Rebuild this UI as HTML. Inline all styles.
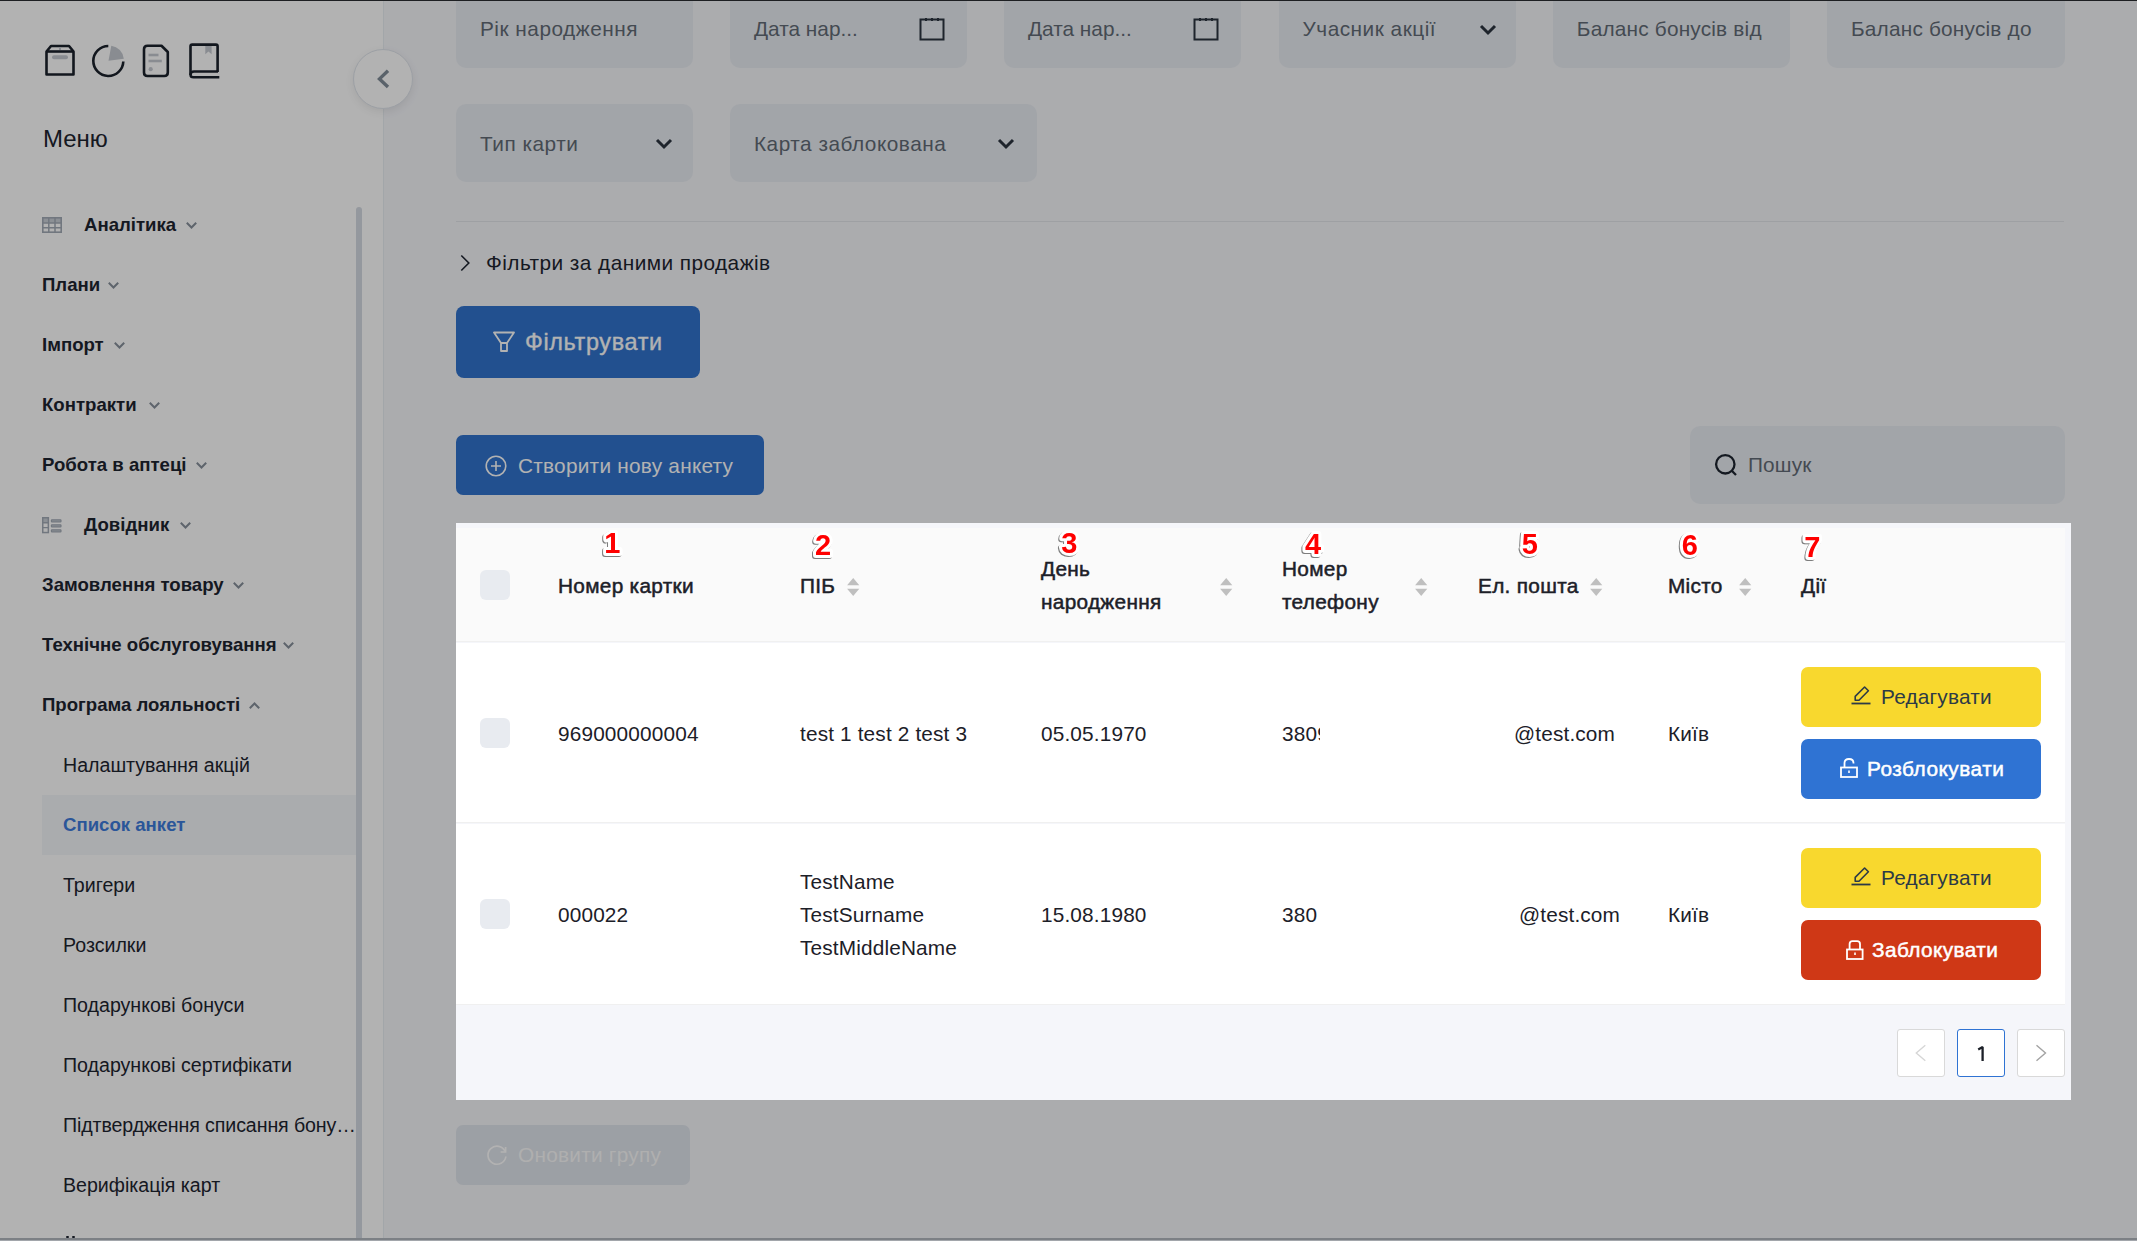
<!DOCTYPE html>
<html><head><meta charset="utf-8">
<style>
*{box-sizing:border-box;margin:0;padding:0}
html,body{width:2137px;height:1241px;overflow:hidden}
body{font-family:"Liberation Sans",sans-serif;background:#f5f6fa;position:relative;color:#1e2530}
.abs{position:absolute}
svg{position:absolute;overflow:visible}
#side{position:absolute;left:0;top:0;width:384px;height:1241px;background:#fff;border-right:1px solid #e9eef2}
.mi{position:absolute;left:42px;font-size:18.6px;font-weight:bold;color:#1e2530;white-space:nowrap;line-height:20px}
.si{position:absolute;left:63px;font-size:19.6px;color:#1e2530;white-space:nowrap;line-height:20px}
.inp{position:absolute;width:237px;height:78px;background:#e9edf2;border-radius:10px}
.inp .t{position:absolute;left:24px;font-size:20.8px;letter-spacing:.5px;line-height:20px;color:#626b76;white-space:nowrap}
.btn{position:absolute;background:#3173cd;border-radius:7px;color:#fff;white-space:nowrap}
#hl{position:absolute;left:456px;top:523px;width:1615px;height:577px;background:#f5f6fa;box-shadow:0 0 0 4000px rgba(0,0,0,.3);z-index:5}
#tbl{position:absolute;left:456px;top:523px;width:1615px;height:577px;z-index:6}
.th{position:absolute;font-size:20.8px;color:#1c2028;line-height:20px;white-space:nowrap;letter-spacing:.3px;-webkit-text-stroke:.5px #1c2028}
.td{position:absolute;font-size:20.8px;color:#1c2028;line-height:20px;white-space:nowrap;letter-spacing:.15px}
.cb{position:absolute;left:24px;width:30px;height:30px;border-radius:6px;background:#e8ebf0}
.abtn{position:absolute;left:1345px;width:240px;height:60px;border-radius:7px;white-space:nowrap}
.abtn span{position:absolute;line-height:20px;white-space:nowrap}
.pg{position:absolute;top:506px;width:48px;height:48px;border:1px solid #d9d9d9;border-radius:3px;background:#fff}
.num{position:absolute;font-size:29px;font-weight:bold;color:#f00;line-height:20px;
 text-shadow:0 0 1px #fff,1.5px 0 0 #fff,-1.5px 0 0 #fff,0 1.5px 0 #fff,0 -1.5px 0 #fff,1.5px 1.5px 0 #fff,-1.5px -1.5px 0 #fff,1.5px -1.5px 0 #fff,-1.5px 1.5px 0 #fff,0 3px 1px #999}
</style></head><body>
<div id="side">
  <!-- top icons -->
  <svg style="left:0;top:0" width="240" height="100" viewBox="0 0 240 100">
    <!-- box -->
    <path d="M46.5 51.5 L51 46 H69 L73.5 51.5 V74.5 H46.5 Z" fill="none" stroke="#1b212b" stroke-width="2.6" stroke-linejoin="round"/>
    <line x1="46.5" y1="51.5" x2="73.5" y2="51.5" stroke="#1b212b" stroke-width="2.6"/>
    <line x1="60" y1="47" x2="60" y2="50" stroke="#c5c9d0" stroke-width="2"/>
    <line x1="54" y1="57.3" x2="66" y2="57.3" stroke="#c5c9d0" stroke-width="4" stroke-linecap="round"/>
    <!-- pie -->
    <path d="M108.3 46 A15 15 0 1 0 123.3 61.5" fill="none" stroke="#1b212b" stroke-width="2.6"/>
    <path d="M108.5 60.8 L111.3 45.8 A14.5 14.5 0 0 1 123.8 58.8 Z" fill="#c5c9d0"/>
    <!-- doc -->
    <path d="M147.5 45.8 H161.5 L167.8 52 V72.5 Q167.8 76 164.3 76 H147.5 Q144 76 144 72.5 V49.3 Q144 45.8 147.5 45.8 Z" fill="none" stroke="#1b212b" stroke-width="2.6" stroke-linejoin="round"/>
    <line x1="148.5" y1="55" x2="158.5" y2="55" stroke="#c5c9d0" stroke-width="2.6"/>
    <line x1="148.5" y1="61" x2="161.8" y2="61" stroke="#c5c9d0" stroke-width="2.6"/>
    <circle cx="150.7" cy="69.2" r="2.1" fill="#c5c9d0"/>
    <!-- book -->
    <path d="M218 71.5 H194 Q190.5 71.5 190.5 75 Q190.5 77.3 193.5 77.3 H219.3" fill="none" stroke="#1b212b" stroke-width="2.4"/>
    <path d="M190.5 75 V46.3 Q190.5 44.6 192.2 44.6 H216 Q217.6 44.6 217.6 46.3 V72" fill="none" stroke="#1b212b" stroke-width="2.6"/>
    <path d="M205.3 46 H211.6 V54.2 L208.45 51.5 L205.3 54.2 Z" fill="#c5c9d0"/>
  </svg>
  <div class="abs" style="left:43px;top:129px;font-size:24px;line-height:20px;color:#1e2530">Меню</div>

  <!-- menu groups; baseline offset: line-height 20px, ascent -->
  <svg style="left:42px;top:217px" width="20" height="16" viewBox="0 0 20 16">
    <rect x="0.8" y="0.8" width="18.4" height="5.2" fill="#c9ced6"/>
    <rect x="0.8" y="0.8" width="18.4" height="14.4" fill="none" stroke="#a3abb6" stroke-width="1.6"/>
    <path d="M0.8 6H19.2M0.8 10.8H19.2M6.8 0.8V15.2M13 0.8V15.2" stroke="#a3abb6" stroke-width="1.5"/>
  </svg>
  <div class="mi" style="left:84px;top:215px">Аналітика</div>
  <div class="mi" style="top:275px">Плани</div>
  <div class="mi" style="top:335px">Імпорт</div>
  <div class="mi" style="top:395px">Контракти</div>
  <div class="mi" style="top:455px">Робота в аптеці</div>
  <svg style="left:42px;top:517px" width="20" height="17" viewBox="0 0 20 17">
    <rect x="0.75" y="0.75" width="5.6" height="5" fill="#c9ced6"/>
    <rect x="0.75" y="0.75" width="5.6" height="14.8" fill="none" stroke="#a3abb6" stroke-width="1.5"/>
    <path d="M0.75 5.8H6.4M0.75 10.6H6.4" stroke="#a3abb6" stroke-width="1.4"/>
    <rect x="9.4" y="2.8" width="9.6" height="2" rx="0.6" fill="#c9ced6" stroke="#a3abb6" stroke-width="1.2"/>
    <rect x="9.4" y="7.8" width="9.6" height="2" rx="0.6" fill="#c9ced6" stroke="#a3abb6" stroke-width="1.2"/>
    <rect x="9.4" y="12.8" width="9.6" height="2" rx="0.6" fill="#c9ced6" stroke="#a3abb6" stroke-width="1.2"/>
  </svg>
  <div class="mi" style="left:84px;top:515px">Довідник</div>
  <div class="mi" style="top:575px">Замовлення товару</div>
  <div class="mi" style="top:635px">Технічне обслуговування</div>
  <div class="mi" style="top:695px">Програма лояльності</div>
  <!-- chevrons -->
  <svg style="left:0;top:0" width="384" height="720" viewBox="0 0 384 720">
    <g fill="none" stroke="#87909b" stroke-width="2" stroke-linecap="square">
      <path d="M187.5 223.5 L191.5 227.5 L195.5 223.5"/>
      <path d="M109.5 283.5 L113.5 287.5 L117.5 283.5"/>
      <path d="M115.5 343.5 L119.5 347.5 L123.5 343.5"/>
      <path d="M150.5 403.5 L154.5 407.5 L158.5 403.5"/>
      <path d="M197.5 463.5 L201.5 467.5 L205.5 463.5"/>
      <path d="M181.5 523.5 L185.5 527.5 L189.5 523.5"/>
      <path d="M234.5 583.5 L238.5 587.5 L242.5 583.5"/>
      <path d="M284.5 643.5 L288.5 647.5 L292.5 643.5"/>
      <path d="M250.5 707.5 L254.5 703.5 L258.5 707.5"/>
    </g>
  </svg>
  <div class="si" style="top:755px">Налаштування акцій</div>
  <div class="abs" style="left:42px;top:795px;width:314px;height:60px;background:#f4f6f9"></div>
  <div class="mi" style="left:63px;top:815px;color:#3d7bdc">Список анкет</div>
  <div class="si" style="top:875px">Тригери</div>
  <div class="si" style="top:935px">Розсилки</div>
  <div class="si" style="top:995px">Подарункові бонуси</div>
  <div class="si" style="top:1055px">Подарункові сертифікати</div>
  <div class="si" style="top:1115px;letter-spacing:-.1px">Підтвердження списання бону…</div>
  <div class="si" style="top:1175px">Верифікація карт</div>
  <div class="abs" style="left:66px;top:1236px;width:3px;height:2px;border-radius:1px;background:#1e2530"></div><div class="abs" style="left:72px;top:1236px;width:3px;height:2px;border-radius:1px;background:#1e2530"></div>
  <div class="abs" style="left:356px;top:207px;width:6px;height:1040px;background:#d5dae2;border-radius:3px"></div>
</div>
<!-- collapse button -->
<div class="abs" style="left:353px;top:49px;width:60px;height:60px;border-radius:50%;background:#fff;border:1px solid #e0e5ec;box-shadow:0 3px 8px rgba(0,0,0,.08)"></div>
<svg style="left:354px;top:50px" width="58" height="58" viewBox="0 0 58 58">
  <path d="M34 20.7 L25.5 28.9 L34 37" fill="none" stroke="#818d99" stroke-width="3.4"/>
</svg>

<div id="main">
  <!-- row 1 inputs -->
  <div class="inp" style="left:456px;top:-10px"><div class="t" style="top:29px">Рік народження</div></div>
  <div class="inp" style="left:730px;top:-10px"><div class="t" style="top:29px;letter-spacing:0">Дата нар...</div>
    <svg style="left:189px;top:27px" width="26" height="24" viewBox="0 0 26 24"><rect x="1.5" y="2.5" width="23" height="20" fill="none" stroke="#2b3440" stroke-width="2"/><path d="M7 1V4M13 1V4M19 1V4" stroke="#2b3440" stroke-width="2"/></svg></div>
  <div class="inp" style="left:1004px;top:-10px"><div class="t" style="top:29px;letter-spacing:0">Дата нар...</div>
    <svg style="left:189px;top:27px" width="26" height="24" viewBox="0 0 26 24"><rect x="1.5" y="2.5" width="23" height="20" fill="none" stroke="#2b3440" stroke-width="2"/><path d="M7 1V4M13 1V4M19 1V4" stroke="#2b3440" stroke-width="2"/></svg></div>
  <div class="inp" style="left:1278.6px;top:-10px;width:237.5px"><div class="t" style="top:29px">Учасник акції</div>
    <svg style="left:200px;top:33px" width="18" height="14" viewBox="0 0 18 14"><path d="M2 3 L9 10 L16 3" fill="none" stroke="#2b3440" stroke-width="3"/></svg></div>
  <div class="inp" style="left:1552.8px;top:-10px;width:237.5px"><div class="t" style="top:29px;letter-spacing:.2px">Баланс бонусів від</div></div>
  <div class="inp" style="left:1827px;top:-10px;width:237.5px"><div class="t" style="top:29px;letter-spacing:.2px">Баланс бонусів до</div></div>
  <!-- row 2 -->
  <div class="inp" style="left:456px;top:104px"><div class="t" style="top:30px">Тип карти</div>
    <svg style="left:199px;top:33px" width="18" height="14" viewBox="0 0 18 14"><path d="M2 3 L9 10 L16 3" fill="none" stroke="#2b3440" stroke-width="3"/></svg></div>
  <div class="inp" style="left:730px;top:104px;width:307px"><div class="t" style="top:30px">Карта заблокована</div>
    <svg style="left:267px;top:33px" width="18" height="14" viewBox="0 0 18 14"><path d="M2 3 L9 10 L16 3" fill="none" stroke="#2b3440" stroke-width="3"/></svg></div>
  <div class="abs" style="left:456px;top:221px;width:1608px;height:1px;background:#e2e5ea"></div>
  <svg style="left:456px;top:250px" width="20" height="24" viewBox="0 0 20 24"><path d="M5.3 5.5 L12.8 13 L5.3 20.5" fill="none" stroke="#1e2530" stroke-width="1.6"/></svg>
  <div class="abs" style="left:486px;top:253px;font-size:20.8px;letter-spacing:.45px;line-height:20px;color:#1e2530;white-space:nowrap">Фільтри за даними продажів</div>
  <!-- filter button -->
  <div class="btn" style="left:456px;top:306px;width:244px;height:72px;border-radius:8px">
    <svg style="left:36px;top:25px" width="24" height="22" viewBox="0 0 24 22"><path d="M2 1.5 H22 L15 12 V20 H9 V12 Z M9 12 H15" fill="none" stroke="#fff" stroke-width="1.8" stroke-linejoin="round"/></svg>
    <span class="abs" style="left:69px;top:26px;font-size:23.4px;letter-spacing:.65px;-webkit-text-stroke:.35px #fff;line-height:20px">Фільтрувати</span>
  </div>
  <!-- create -->
  <div class="btn" style="left:456px;top:435px;width:308px;height:60px">
    <svg style="left:29px;top:20px" width="22" height="22" viewBox="0 0 22 22"><circle cx="11" cy="11" r="9.8" fill="none" stroke="#fff" stroke-width="1.6"/><path d="M11 6V16M6 11H16" stroke="#fff" stroke-width="1.6"/></svg>
    <span class="abs" style="left:62px;top:21px;font-size:20.8px;letter-spacing:.25px;line-height:20px">Створити нову анкету</span>
  </div>
  <!-- search -->
  <div class="inp" style="left:1690px;top:426px;width:375px;height:78px">
    <svg style="left:24px;top:27px" width="24" height="24" viewBox="0 0 24 24"><circle cx="11.3" cy="11.3" r="9.2" fill="none" stroke="#1e2530" stroke-width="2.3"/><path d="M17.8 17.8 L22 22" stroke="#1e2530" stroke-width="2.3"/></svg>
    <div class="t" style="left:58px;top:29.3px;letter-spacing:.15px">Пошук</div>
  </div>
  <!-- refresh button -->
  <div class="abs" style="left:456px;top:1125px;width:234px;height:60px;background:#e0e5ec;border-radius:7px">
    <svg style="left:30px;top:20px" width="22" height="22" viewBox="0 0 22 22"><path d="M19.2 6.5 A9 9 0 1 0 19.9 11.5" fill="none" stroke="#fff" stroke-width="1.7"/><path d="M19.6 2 V7 H14.6" fill="none" stroke="#fff" stroke-width="1.7"/></svg>
    <span class="abs" style="left:62px;top:20px;font-size:20.8px;letter-spacing:.25px;line-height:20px;color:#fbfbfb;white-space:nowrap">Оновити групу</span>
  </div>
</div>

<div id="hl"></div>
<div id="tbl">
<div class="abs" style="left:0;top:5px;width:1609px;height:114px;background:#fafafa;border-bottom:1px solid #f0f0f0"></div>
<div class="abs" style="left:0;top:120px;width:1609px;height:180px;background:#fff;border-bottom:1px solid #f0f0f0"></div>
<div class="abs" style="left:0;top:301px;width:1609px;height:181px;background:#fff;border-bottom:1px solid #f0f0f0"></div>
<div class="cb" style="top:47px"></div>
<div class="cb" style="top:195px"></div>
<div class="cb" style="top:376px"></div>
<div class="th" style="left:102px;top:53.1px">Номер картки</div>
<div class="th" style="left:344px;top:53.1px">ПІБ</div>
<svg style="left:391px;top:55px" width="12" height="18" viewBox="0 0 12 18"><path d="M6.2 0 L12.3 7.2 H0.1 Z M6.2 18 L12.3 10.8 H0.1 Z" fill="#bfbfbf"/></svg>
<div class="th" style="left:585px;top:36.3px">День</div>
<div class="th" style="left:585px;top:69.3px">народження</div>
<svg style="left:764px;top:55px" width="12" height="18" viewBox="0 0 12 18"><path d="M6.2 0 L12.3 7.2 H0.1 Z M6.2 18 L12.3 10.8 H0.1 Z" fill="#bfbfbf"/></svg>
<div class="th" style="left:826px;top:36.3px">Номер</div>
<div class="th" style="left:826px;top:69.3px">телефону</div>
<svg style="left:959px;top:55px" width="12" height="18" viewBox="0 0 12 18"><path d="M6.2 0 L12.3 7.2 H0.1 Z M6.2 18 L12.3 10.8 H0.1 Z" fill="#bfbfbf"/></svg>
<div class="th" style="left:1022px;top:53.1px">Ел. пошта</div>
<svg style="left:1134px;top:55px" width="12" height="18" viewBox="0 0 12 18"><path d="M6.2 0 L12.3 7.2 H0.1 Z M6.2 18 L12.3 10.8 H0.1 Z" fill="#bfbfbf"/></svg>
<div class="th" style="left:1212px;top:53.1px">Місто</div>
<svg style="left:1283px;top:55px" width="12" height="18" viewBox="0 0 12 18"><path d="M6.2 0 L12.3 7.2 H0.1 Z M6.2 18 L12.3 10.8 H0.1 Z" fill="#bfbfbf"/></svg>
<div class="th" style="left:1345px;top:53.1px">Дії</div>
<div class="td" style="left:102px;top:200.8px;">969000000004</div>
<div class="td" style="left:344px;top:200.8px;">test 1 test 2 test 3</div>
<div class="td" style="left:585px;top:200.8px;">05.05.1970</div>
<div class="td" style="left:826px;top:200.8px;width:38px;overflow:hidden">3809</div>
<div class="td" style="left:1058px;top:200.8px;">@test.com</div>
<div class="td" style="left:1212px;top:200.8px;">Київ</div>
<div class="td" style="left:102px;top:382.2px;">000022</div>
<div class="td" style="left:344px;top:349.3px;">TestName</div>
<div class="td" style="left:344px;top:382.2px;">TestSurname</div>
<div class="td" style="left:344px;top:415.1px;">TestMiddleName</div>
<div class="td" style="left:585px;top:382.2px;">15.08.1980</div>
<div class="td" style="left:826px;top:382.2px;">380</div>
<div class="td" style="left:1063px;top:382.2px;">@test.com</div>
<div class="td" style="left:1212px;top:382.2px;">Київ</div>
<div class="abtn" style="top:144px;background:#f8d82e"><svg style="left:50px;top:18px" width="20" height="20" viewBox="0 0 20 20"><path d="M4.2 15.2 V11.4 L13.6 2 L17.4 5.8 L8 15.2 Z" fill="none" stroke="#2d3a46" stroke-width="1.6" stroke-linejoin="round"/><path d="M0.5 18.5 H19.5" stroke="#2d3a46" stroke-width="1.8"/></svg><span style="left:80px;top:19.5px;font-size:20.8px;letter-spacing:.2px;color:#2d3a46">Редагувати</span></div>
<div class="abtn" style="top:216px;background:#2f73d3"><svg style="left:39px;top:19px" width="18" height="20" viewBox="0 0 18 20"><rect x="1" y="9.5" width="16" height="9.5" fill="none" stroke="#fff" stroke-width="1.8"/><path d="M4.5 9.5 V5 Q4.5 1 9 1 Q13.5 1 13.5 5 V5.5" fill="none" stroke="#fff" stroke-width="1.8"/><path d="M9 12.5 V15" stroke="#fff" stroke-width="1.6"/></svg><span style="left:66px;top:19.5px;font-size:20.8px;letter-spacing:.5px;-webkit-text-stroke:.5px #fff;color:#fff">Розблокувати</span></div>
<div class="abtn" style="top:325px;background:#f8d82e"><svg style="left:50px;top:18px" width="20" height="20" viewBox="0 0 20 20"><path d="M4.2 15.2 V11.4 L13.6 2 L17.4 5.8 L8 15.2 Z" fill="none" stroke="#2d3a46" stroke-width="1.6" stroke-linejoin="round"/><path d="M0.5 18.5 H19.5" stroke="#2d3a46" stroke-width="1.8"/></svg><span style="left:80px;top:19.5px;font-size:20.8px;letter-spacing:.2px;color:#2d3a46">Редагувати</span></div>
<div class="abtn" style="top:397px;background:#cf3816"><svg style="left:45.3px;top:19.5px" width="18" height="20" viewBox="0 0 18 20"><rect x="1" y="9.5" width="15.6" height="9.5" fill="none" stroke="#fff" stroke-width="1.8"/><path d="M3.6 9.5 V4 Q3.6 1.2 6.4 1.2 H11.2 Q14 1.2 14 4 V9.5" fill="none" stroke="#fff" stroke-width="1.8"/><path d="M9 12.5 V15" stroke="#fff" stroke-width="1.6"/></svg><span style="left:71px;top:19.5px;font-size:20.8px;letter-spacing:.4px;-webkit-text-stroke:.5px #fff;color:#fff">Заблокувати</span></div>
<svg style="left:0;top:0;filter:drop-shadow(-0.2px 1px 0.6px rgba(0,0,0,.5))" width="1615" height="80" viewBox="0 0 1615 80"><text x="156.2" y="30.0" text-anchor="middle" font-family="Liberation Sans" font-weight="bold" font-size="29" fill="#f00" stroke="#fff" stroke-width="6" stroke-linejoin="round" paint-order="stroke">1</text><text x="367.0" y="32.0" text-anchor="middle" font-family="Liberation Sans" font-weight="bold" font-size="29" fill="#f00" stroke="#fff" stroke-width="6" stroke-linejoin="round" paint-order="stroke">2</text><text x="613.2" y="30.0" text-anchor="middle" font-family="Liberation Sans" font-weight="bold" font-size="29" fill="#f00" stroke="#fff" stroke-width="6" stroke-linejoin="round" paint-order="stroke">3</text><text x="857.0" y="31.2" text-anchor="middle" font-family="Liberation Sans" font-weight="bold" font-size="29" fill="#f00" stroke="#fff" stroke-width="6" stroke-linejoin="round" paint-order="stroke">4</text><text x="1073.7" y="31.2" text-anchor="middle" font-family="Liberation Sans" font-weight="bold" font-size="29" fill="#f00" stroke="#fff" stroke-width="6" stroke-linejoin="round" paint-order="stroke">5</text><text x="1233.9" y="32.3" text-anchor="middle" font-family="Liberation Sans" font-weight="bold" font-size="29" fill="#f00" stroke="#fff" stroke-width="6" stroke-linejoin="round" paint-order="stroke">6</text><text x="1356.2" y="33.8" text-anchor="middle" font-family="Liberation Sans" font-weight="bold" font-size="29" fill="#f00" stroke="#fff" stroke-width="6" stroke-linejoin="round" paint-order="stroke">7</text></svg>
<div class="pg" style="left:1441px"><svg style="left:16px;top:14px" width="14" height="18" viewBox="0 0 14 18"><path d="M11.3 1.2 L2.3 9 L11.3 16.8" fill="none" stroke="#d6d6d6" stroke-width="1.4"/></svg></div>
<div class="pg" style="left:1501px;border-color:#2f73d3"><svg style="left:16.6px;top:16px" width="12" height="16" viewBox="0 0 12 16"><path d="M3.2 3.4 L7.6 1 V15" fill="none" stroke="#1c2028" stroke-width="2.3" stroke-linejoin="bevel"/></svg></div>
<div class="pg" style="left:1561px"><svg style="left:16px;top:14px" width="14" height="18" viewBox="0 0 14 18"><path d="M2.5 1.2 L11.5 9 L2.5 16.8" fill="none" stroke="#a3a3a3" stroke-width="1.4"/></svg></div>
</div>
<div class="abs" style="left:0;top:0;width:2137px;height:1px;background:#1d1f22;z-index:10"></div>
<div class="abs" style="left:0;top:1238px;width:2137px;height:2px;background:#7c8085;z-index:10"></div>
<div class="abs" style="left:0;top:1240px;width:2137px;height:1px;background:#a2a6ab;z-index:10"></div>
</body></html>
